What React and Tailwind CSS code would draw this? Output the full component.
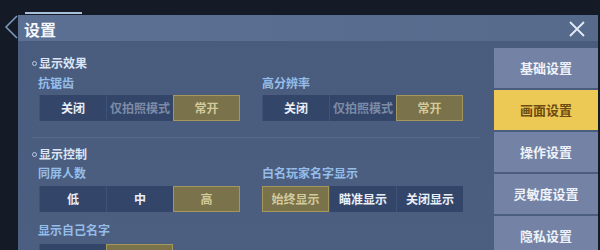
import React from "react";

const font = { fontFamily: '"Noto Sans CJK SC", "Noto Sans", sans-serif' };

const Seg = ({ items, active, dim = [] }) => (
  <div className="flex">
    {items.map((t, i) => {
      const on = i === active;
      const off = dim.includes(i);
      return (
        <div
          key={i}
          className={
            "w-[67px] h-[26px] flex items-center justify-center text-[12px] font-bold " +
            (on
              ? "bg-[#79724a] border border-[#a4975a] text-[#d3ca9c]"
              : "bg-[#33466a] border-l border-[#3e527a] " + (off ? "text-[#7d8ba6]" : "text-[#e9eef7]"))
          }
        >
          {t}
        </div>
      );
    })}
  </div>
);

const Section = ({ children }) => (
  <div className="h-[18px] flex items-center text-[12px] font-bold text-[#dbe5f4] -ml-[6px]">
    <span className="w-[5px] h-[5px] rounded-full border border-[#b9cbe6] mr-[2px]" />
    {children}
  </div>
);

const Label = ({ children }) => (
  <div className="h-[18px] flex items-center text-[12px] font-bold text-[#95bde9]">{children}</div>
);

const sideItems = ["基础设置", "画面设置", "操作设置", "灵敏度设置", "隐私设置"];

export default function App() {
  return (
    <div className="w-[600px] h-[250px] bg-[#141b27] overflow-hidden relative" style={font}>
      {/* left bracket + top line */}
      <svg className="absolute left-0 top-0" width="30" height="45" viewBox="0 0 30 45">
        <path d="M17 16 L6 27 L17 38" stroke="#7f9cc4" strokeWidth="1.5" fill="none" />
      </svg>
      <div className="absolute left-[25px] top-[12px] w-[57px] h-[2px] bg-[#a9bfdc]" />

      <div className="ml-[18px] mt-[15px] w-[580px] h-[235px] flex flex-col">
        <div className="h-[28px] bg-gradient-to-r from-[#5c7094] to-[#566a8c] flex items-center justify-between pl-[6px] pr-[12px]">
          <span className="text-[16px] font-bold text-[#f4f7fb] mt-[2px]">设置</span>
          <svg width="18" height="18" viewBox="0 0 18 18" className="mt-[2px]">
            <path d="M2 2 L16 16 M16 2 L2 16" stroke="#e4ebf5" strokeWidth="1.8" />
          </svg>
        </div>
        <div className="flex-1 flex bg-gradient-to-b from-[#4a5c7d] to-[#4d5f80]">
          <div className="flex-1 pl-[20px] pt-[13px]">
            <Section>显示效果</Section>
            <div className="flex gap-[22px] mt-[2px]">
              <div>
                <Label>抗锯齿</Label>
                <div className="mt-[3px] ml-[1px]">
                  <Seg items={["关闭", "仅拍照模式", "常开"]} active={2} dim={[1]} />
                </div>
              </div>
              <div>
                <Label>高分辨率</Label>
                <div className="mt-[3px]">
                  <Seg items={["关闭", "仅拍照模式", "常开"]} active={2} dim={[1]} />
                </div>
              </div>
            </div>
            <div className="h-px bg-[#56688a] w-[448px] -ml-[6px] mt-[16px]" />
            <div className="mt-[7px]">
              <Section>显示控制</Section>
            </div>
            <div className="flex gap-[22px] mt-[1px]">
              <div>
                <Label>同屏人数</Label>
                <div className="mt-[4px] ml-[1px]">
                  <Seg items={["低", "中", "高"]} active={2} />
                </div>
              </div>
              <div>
                <Label>白名玩家名字显示</Label>
                <div className="mt-[4px]">
                  <Seg items={["始终显示", "瞄准显示", "关闭显示"]} active={0} />
                </div>
              </div>
            </div>
            <div className="mt-[9px]">
              <Label>显示自己名字</Label>
              <div className="mt-[5px] ml-[1px]">
                <Seg items={["", ""]} active={1} />
              </div>
            </div>
          </div>
          <div className="w-[104px] pt-[7px] flex flex-col gap-[2px]">
            {sideItems.map((t, i) => (
              <div
                key={t}
                className={
                  "h-[40px] shrink-0 flex items-center justify-center text-[13px] font-bold " +
                  (i === 1 ? "bg-[#ecc954] text-[#6e4b12]" : "bg-[#7483a5] text-[#eef2f8]")
                }
              >
                {t}
              </div>
            ))}
          </div>
        </div>
      </div>
    </div>
  );
}
